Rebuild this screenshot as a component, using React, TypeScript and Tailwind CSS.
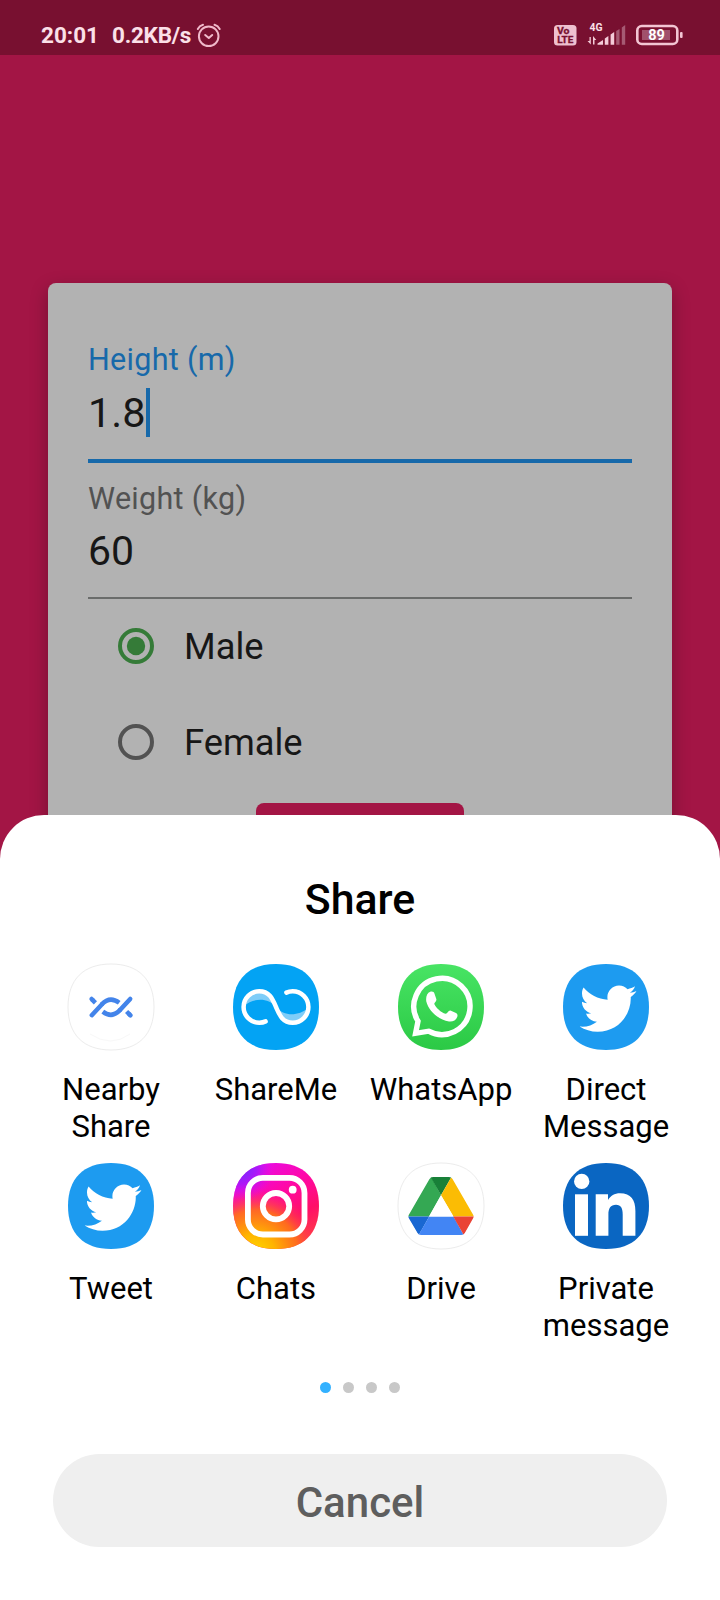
import type { ReactNode } from "react";
import { FaTwitter } from "react-icons/fa";

const SQUIRCLE = "M43 0C70.5 0 86 15.5 86 43C86 70.5 70.5 86 43 86C15.5 86 0 70.5 0 43C0 15.5 15.5 0 43 0Z";

function Tile({ fill, outlined, children }: { fill: string; outlined?: boolean; children?: ReactNode }) {
  return (
    <svg viewBox="0 0 86 86" className="block size-[86px] shrink-0 overflow-visible">
      <path d={SQUIRCLE} fill={fill} stroke={outlined ? "#ececec" : "none"} strokeWidth="1" />
      {children}
    </svg>
  );
}

function NearbyIcon() {
  return (
    <Tile fill="#ffffff" outlined>
      <g fill="none" stroke="#4384ea" strokeWidth="4.5">
        <path strokeLinecap="round" d="M23.8 51.2L34 40.2" />
        <path d="M33.6 40.6C39 34.7 45 34.1 51.2 38.8" />
        <path strokeLinecap="round" d="M62.2 35L52 46" />
        <path d="M52.4 45.6C47 51.8 41 52.4 34.8 47.6" />
        <path strokeLinecap="round" d="M23.6 35L24.6 36" />
        <path d="M24 35.4L27.4 38.8" />
        <path strokeLinecap="round" d="M61.4 50.3L62.4 51.3" />
        <path d="M58.6 47.5L62 50.9" />
      </g>
      <path d="M22 70Q43 84 62 70" fill="none" stroke="#f8f8f8" />
    </Tile>
  );
}

function ShareMeIcon() {
  return (
    <Tile fill="#03a3f4">
      <path d="M11 42C12 31 18 27.3 26.3 27.3C36 27.3 40 35 43 43C35 33 20 34 11 42Z" fill="#7fcdf8" />
      <path d="M75 44C74 55 68 58.7 59.7 58.7C50 58.7 46 51 43 43C51 53 66 52 75 44Z" fill="#7fcdf8" />
      <path
        d="M32.6 57.4C30.5 58.4 28.4 58.7 26.3 58.7A15.7 15.7 0 0 1 26.3 27.3C36.5 27.3 39.5 35 43 43C46.500 51 49.5 58.7 59.7 58.7A15.7 15.7 0 0 0 59.7 27.3C57.600 27.3 55.5 27.6 53.400 28.6"
        fill="none"
        stroke="#fff"
        strokeWidth="4.500"
        strokeLinecap="round"
      />
    </Tile>
  );
}

function WhatsAppIcon() {
  return (
    <Tile fill="url(#whatsapp)">
      <defs>
        <linearGradient id="whatsapp" x1="0" y1="0" x2="0" y2="1">
          <stop offset="0" stopColor="#48e464" />
          <stop offset="1" stopColor="#2bc945" />
        </linearGradient>
      </defs>
      <path
        d="M20 57.2A28.100 28.100 0 1 1 30.6 67.200L17.600 69.300Z"
        fill="none"
        stroke="#fff"
        strokeWidth="5.4"
        strokeMiterlimit="10"
      />
      <path
        d="M32.2 27.800C34.600 27.200 36 28 36.600 30L38.300 35C39 37.200 36 38.400 36.300 40C38 44 43 48.400 47.600 49.800C49.400 50 50.300 46.300 52.400 46.600L58 49C59.600 49.800 59.800 51.300 59.200 53C58 56.500 54.500 58 51 57.500C40 55.500 30.500 46.500 28.300 37.500C27.600 33 29 29 32.200 27.800Z"
        fill="#fff"
      />
    </Tile>
  );
}

function TwitterIcon() {
  return (
    <Tile fill="#1d9bf0">
      <FaTwitter x={16.6} y={16.1} size={57} color="#fff" />
    </Tile>
  );
}

function InstagramIcon() {
  return (
    <Tile fill="url(#igBase)">
      <defs>
        <linearGradient id="igBase" x1="0.2" y1="0" x2="0.75" y2="1">
          <stop offset="0" stopColor="#e40cf0" />
          <stop offset="0.38" stopColor="#ff08a8" />
          <stop offset="0.7" stopColor="#ff0f68" />
          <stop offset="1" stopColor="#ff3f45" />
        </linearGradient>
        <radialGradient id="igWarm" cx="0.26" cy="1.05" r="0.76">
          <stop offset="0" stopColor="#ffd900" />
          <stop offset="0.3" stopColor="#ffb400" />
          <stop offset="0.66" stopColor="#ff7218" stopOpacity="0.9" />
          <stop offset="1" stopColor="#ff2260" stopOpacity="0" />
        </radialGradient>
        <radialGradient id="igCool" cx="0.1" cy="0.06" r="0.38">
          <stop offset="0" stopColor="#6a2cff" />
          <stop offset="0.5" stopColor="#a01aff" stopOpacity="0.8" />
          <stop offset="1" stopColor="#e40cf0" stopOpacity="0" />
        </radialGradient>
      </defs>
      <path d={SQUIRCLE} fill="url(#igWarm)" />
      <path d={SQUIRCLE} fill="url(#igCool)" />
      <g fill="none" stroke="#fff" strokeWidth="5.8">
        <rect x="14.9" y="14.9" width="56.6" height="56.6" rx="15" />
        <circle cx="43" cy="43.200" r="13.200" />
      </g>
      <circle cx="59.700" cy="26.700" r="3.900" fill="#fff" />
    </Tile>
  );
}

function DriveIcon() {
  return (
    <Tile fill="#ffffff" outlined>
      <defs>
        <clipPath id="driveShape">
          <path d="M35 14H51Q53.300 14 54.500 16L75 51.500Q76.200 53.500 75 55.500L66.800 70Q65.600 72 63.300 72H23Q20.700 72 19.500 70L11 55.500Q9.800 53.500 11 51.500L31.500 16Q32.700 14 35 14Z" />
        </clipPath>
      </defs>
      <g clipPath="url(#driveShape)">
        <path d="M32.700 13L43 32.200L31 53.400H9V50Z" fill="#34a853" />
        <path d="M32 13H54L43 32.200Z" fill="#188038" />
        <path d="M54 13L43 32.200L55.500 53.400H77Z" fill="#fbbc04" />
        <path d="M9 53.400H31.200L20.500 72.500Z" fill="#1967d2" />
        <path d="M31.200 53.400H55.500L66 72.500H20.300Z" fill="#4285f4" />
        <path d="M55.200 53.400H77L66 72.500Z" fill="#ea4335" />
      </g>
      <path d="M43 32.200L55.400 53.400H31Z" fill="#fff" />
    </Tile>
  );
}

function LinkedInIcon() {
  return (
    <Tile fill="#0a66c2">
      <circle cx="18.700" cy="18.400" r="7.700" fill="#fff" />
      <rect x="12" y="31.300" width="13" height="41.500" fill="#fff" />
      <path
        d="M32.700 31.300H45V37C47.500 32.800 51.500 30.300 57 30.300C68 30.300 72.400 37 72.400 48V72.800H59.700V51.500C59.700 45.500 58 41.800 53 41.800C47.500 41.800 45.400 45.500 45.400 51.500V72.800H32.700Z"
        fill="#fff"
      />
    </Tile>
  );
}

const TARGETS: { lines: string[]; icon: ReactNode }[] = [
  { lines: ["Nearby", "Share"], icon: <NearbyIcon /> },
  { lines: ["ShareMe"], icon: <ShareMeIcon /> },
  { lines: ["WhatsApp"], icon: <WhatsAppIcon /> },
  { lines: ["Direct", "Message"], icon: <TwitterIcon /> },
  { lines: ["Tweet"], icon: <TwitterIcon /> },
  { lines: ["Chats"], icon: <InstagramIcon /> },
  { lines: ["Drive"], icon: <DriveIcon /> },
  { lines: ["Private", "message"], icon: <LinkedInIcon /> },
];

function StatusBar() {
  return (
    <header className="flex h-[55px] items-start justify-between bg-[#781030] pr-[37px] pl-[41px] text-[#fbe0e8]">
      <div className="flex pt-[22px]">
        <span className="w-[71px] text-[22.5px] leading-[26px] font-bold">20:01</span>
        <span className="w-[84px] text-[22.5px] leading-[26px] font-bold tracking-[-0.25px]">0.2KB/s</span>
        <svg viewBox="0 0 26 26" className="mt-px size-[26px]" fill="none" stroke="#f0b9ca" strokeWidth="2" strokeLinecap="round" strokeLinejoin="round">
          <circle cx="12.700" cy="13.300" r="9.800" />
          <path d="M9.200 12L12.800 15L16.200 12" />
          <path d="M1.800 6Q3.500 2.800 7 1.800M18.500 1.800Q22 2.800 23.700 6" />
        </svg>
      </div>
      <svg viewBox="0 0 132 26" className="mt-[21px] h-[26px] w-[132px] font-['Roboto',sans-serif] font-bold">
        <rect x="3" y="4" width="22.500" height="20.500" rx="3.500" fill="#efc0cf" />
        <text x="6" y="13.300" fontSize="9.500" fill="#781030" stroke="#781030" strokeWidth=".3" textLength="12.500" lengthAdjust="spacingAndGlyphs">Vo</text>
        <text x="6.300" y="22.300" fontSize="9.500" fill="#781030" stroke="#781030" strokeWidth=".3" textLength="16" lengthAdjust="spacingAndGlyphs">LTE</text>
        <text x="38.500" y="9.500" fontSize="10" fill="#fbe0e8" textLength="13" lengthAdjust="spacingAndGlyphs">4G</text>
        <g fill="#f4cbd8">
          <path d="M38.500 16H39.800V23.500L36.500 20H38.500ZM42 23.500H43.500V19H45.300L42 15Z" />
          <path d="M46.500 23.800V22.500L52 19V23.800Z" />
          <path d="M53.800 23.800V17.500L57.400 15V23.800Z" />
          <path d="M59.600 23.800V13.500L63.200 11V23.800Z" />
        </g>
        <g fill="#a65a73">
          <path d="M65.200 23.800V10L68.500 8V23.800Z" />
          <path d="M70.800 23.800V6.500L74.200 4V23.800Z" />
        </g>
        <rect x="86.300" y="5" width="40" height="18" rx="4.500" fill="none" stroke="#f3c5d3" strokeWidth="2.600" />
        <rect x="91" y="9" width="28" height="10" fill="#a0506b" />
        <rect x="129" y="11" width="2.600" height="6" rx="1" fill="#f3c5d3" />
        <text x="97.300" y="19" fontSize="14.500" fill="#fff">89</text>
      </svg>
    </header>
  );
}

function Radio({ label, checked }: { label: string; checked?: boolean }) {
  return (
    <label className="flex h-24 items-center pl-[30px]">
      <svg viewBox="0 0 36 36" className={checked ? "mb-0.5 size-9 text-[#357b38]" : "mb-0.5 size-9 text-[#525252]"}>
        <circle cx="18" cy="18" r="16" fill="none" stroke="currentColor" strokeWidth="4" />
        {checked && <circle cx="18" cy="18" r="9.200" fill="currentColor" />}
      </svg>
      <span className="ml-[30px] text-[36.3px] leading-[42px] text-[#171717]">{label}</span>
    </label>
  );
}

export default function App() {
  return (
    <div className="relative h-[1600px] w-[720px] overflow-hidden bg-[#a31545] font-['Roboto',sans-serif]">
      <StatusBar />
      <main className="mx-12 mt-[228px] h-[600px] rounded-lg bg-[#b2b2b2] px-10 pt-[59px] shadow-[0_6px_18px_rgba(0,0,0,0.28)]">
        <div className="flex h-[121px] flex-col border-b-[4px] border-[#1769aa]">
          <span className="text-[30.5px] leading-[35px] tracking-[0.3px] text-[#1769aa]">Height (m)</span>
          <div className="mt-[11px] flex items-center">
            <span className="text-[41.5px] leading-[49px] text-[#171717]">1.8</span>
            <span className="h-[49px] w-1 bg-[#1769aa]" />
          </div>
        </div>
        <div className="flex h-[136px] flex-col border-b-2 border-[#6a6c6b] pt-[18px]">
          <span className="text-[30.5px] leading-[35px] tracking-[0.3px] text-[#525252]">Weight (kg)</span>
          <span className="mt-[11px] text-[41px] leading-[49px] text-[#171717]">60</span>
        </div>
        <Radio label="Male" checked />
        <Radio label="Female" />
        <div className="mx-auto mt-[12px] h-[70px] w-[208px] rounded-lg bg-[#a31545]" />
      </main>

      <section className="absolute inset-x-0 top-[815px] bottom-0 flex flex-col items-center rounded-t-[44px] bg-white pt-[60px]">
        <h1 className="text-[42.8px] leading-[49px] font-medium text-black">Share</h1>
        <div className="mt-[40px] mr-[3px] grid w-[660px] grid-cols-4">
          {TARGETS.map(({ lines, icon }) => (
            <div key={lines.join(" ")} className="flex h-[199px] flex-col items-center">
              {icon}
              <div className="mt-[21px] text-center text-[31px] leading-[37px] text-black">
                {lines.map((line) => (
                  <div key={line}>{line}</div>
                ))}
              </div>
            </div>
          ))}
        </div>
        <div className="mt-5 flex gap-3">
          <span className="size-[11px] rounded-full bg-[#33b1ff]" />
          <span className="size-[11px] rounded-full bg-[#c8c8c8]" />
          <span className="size-[11px] rounded-full bg-[#c8c8c8]" />
          <span className="size-[11px] rounded-full bg-[#c8c8c8]" />
        </div>
        <button className="mt-[61px] h-[93px] w-[614px] rounded-full bg-[#efefef] pt-[3px] text-[42px] font-medium text-[#5e5e5e]">Cancel</button>
      </section>
    </div>
  );
}
